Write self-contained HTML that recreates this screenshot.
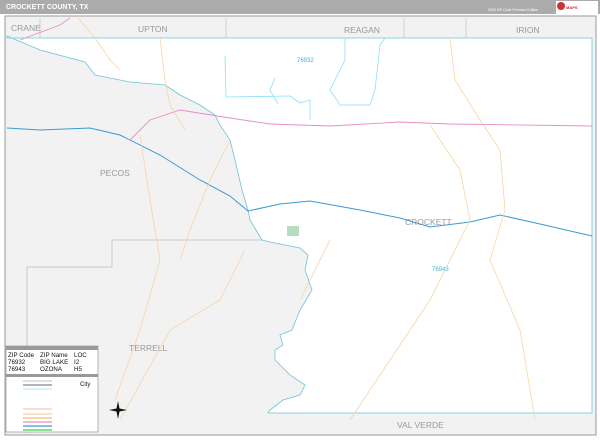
<!DOCTYPE html><html><head><style>body{margin:0;width:600px;height:436px;overflow:hidden;background:#fff;font-family:"Liberation Sans",sans-serif}</style></head><body>
<svg width="600" height="436" xmlns="http://www.w3.org/2000/svg" font-family="Liberation Sans, sans-serif">
<rect width="600" height="436" fill="#fff"/>
<rect x="0" y="0" width="600" height="14" fill="#ababab"/>
<text x="6" y="9" font-size="7" font-weight="bold" fill="#fff">CROCKETT COUNTY, TX</text>
<text x="488" y="11" font-size="3.5" fill="#fff">2026 ZIP Code Premium Edition</text>
<rect x="556" y="1" width="42" height="13" fill="#fff"/>
<circle cx="561" cy="6" r="4" fill="#c33"/><text x="566" y="9" font-size="4" fill="#c33" font-weight="bold">MAPS</text>
<rect x="5" y="16" width="591" height="419" fill="#f2f2f2" stroke="#999" stroke-width="1"/>
<path d="M7,36 L40,50 L85,62 L95,75 L130,82 L165,85 L180,95 L200,105 L215,115 L220,125 L230,140 L235,160 L242,190 L248,210 L250,220 L262,240 L270,242 L300,248 L308,255 L305,270 L312,290 L300,310 L292,330 L280,335 L283,345 L275,350 L275,360 L290,375 L305,385 L300,395 L283,400 L270,410 L268,413 L592,413 L592,38 L7,38 Z" fill="#fff" stroke="#6cc3d8" stroke-width="0.8"/>
<line x1="7" y1="38" x2="592" y2="38" stroke="#88d4e4" stroke-width="0.8"/>
<path d="M40,38V18M226,38V18M404,38V18M466,38V18" stroke="#bbb" stroke-width="0.6"/>
<path d="M27,433V267H112V240H262" fill="none" stroke="#bbb" stroke-width="0.7"/>
<path d="M300,413H592M592,38V413" stroke="#88d4e4" stroke-width="0.8"/>
<g font-size="8.5" fill="#999"><text x="11" y="31">CRANE</text><text x="138" y="32">UPTON</text><text x="344" y="33">REAGAN</text><text x="516" y="33">IRION</text><text x="100" y="176">PECOS</text><text x="129" y="351">TERRELL</text><text x="397" y="428">VAL VERDE</text><text x="405" y="225">CROCKETT</text></g>
<g font-size="6" fill="#3ab0e0"><text x="297" y="62">76932</text><text x="432" y="271">76943</text></g>
<path d="M7,128 L40,130 L90,128 L120,135 L160,155 L200,180 L230,196 L248,211 L280,204 L310,201 L360,210 L400,218 L430,227 L470,222 L500,215 L540,224 L592,236" fill="none" stroke="#3a9ad4" stroke-width="1"/>
<path d="M130,140 L150,120 L180,110 L230,118 L270,124 L330,126 L400,122 L450,124 L592,126" fill="none" stroke="#e88cc8" stroke-width="0.9"/>
<path d="M20,40 L60,25 L70,18" fill="none" stroke="#e88cc8" stroke-width="0.8"/>
<path d="M225,56 L226,97 L290,96 L300,103 L310,100 L310,120 M275,78 L270,90 L278,104 M345,38 L345,60 L330,90 L340,105 L370,105 L375,90 L380,45 L385,38" fill="none" stroke="#88e0f8" stroke-width="0.8"/>
<path d="M78,18 L95,38 L110,60 L120,70 M160,38 L165,80 L170,105 L185,130 M450,38 L455,80 L480,120 L500,150 L505,210 L490,260 L520,330 L535,420 M430,125 L460,170 L470,220 L430,300 L350,420 M140,135 L150,200 L160,260 L140,330 L115,400 M245,250 L220,300 L170,330 L120,420 M330,240 L300,300 M230,140 L210,180 L190,230 L180,260" fill="none" stroke="#f8d4a8" stroke-width="0.8"/>
<rect x="287" y="226" width="12" height="10" fill="#b8dcc0"/>
<rect x="6" y="346" width="92" height="86" fill="#fff" stroke="#888" stroke-width="0.6"/>
<rect x="6" y="346" width="92" height="4" fill="#999"/>
<g font-size="6.2" fill="#111"><text x="8" y="357">ZIP Code</text><text x="40" y="357">ZIP Name</text><text x="74" y="357">LOC</text><text x="8" y="364">76932</text><text x="40" y="364">BIG LAKE</text><text x="74" y="364">I2</text><text x="8" y="371">76943</text><text x="40" y="371">OZONA</text><text x="74" y="371">H5</text></g>
<rect x="6" y="374" width="92" height="3" fill="#999"/>
<g stroke-width="1.2"><line x1="23" y1="381" x2="52" y2="381" stroke="#ccc"/><line x1="23" y1="385" x2="52" y2="385" stroke="#888"/><line x1="23" y1="389" x2="52" y2="389" stroke="#bfeefa"/><line x1="23" y1="409" x2="52" y2="409" stroke="#f4c8c8"/><line x1="23" y1="414" x2="52" y2="414" stroke="#f8d4a8"/><line x1="23" y1="418" x2="52" y2="418" stroke="#f8c070"/><line x1="23" y1="422" x2="52" y2="422" stroke="#e88cc8"/><line x1="23" y1="426" x2="52" y2="426" stroke="#3a9ad4"/><line x1="23" y1="430" x2="52" y2="430" stroke="#4c4"/></g>
<text x="80" y="386" font-size="6" fill="#111">City</text>
<g transform="translate(118,410)" fill="#111"><path d="M0,-9 L1.5,-1.5 L9,0 L1.5,1.5 L0,9 L-1.5,1.5 L-9,0 L-1.5,-1.5Z"/></g>
</svg></body></html>
